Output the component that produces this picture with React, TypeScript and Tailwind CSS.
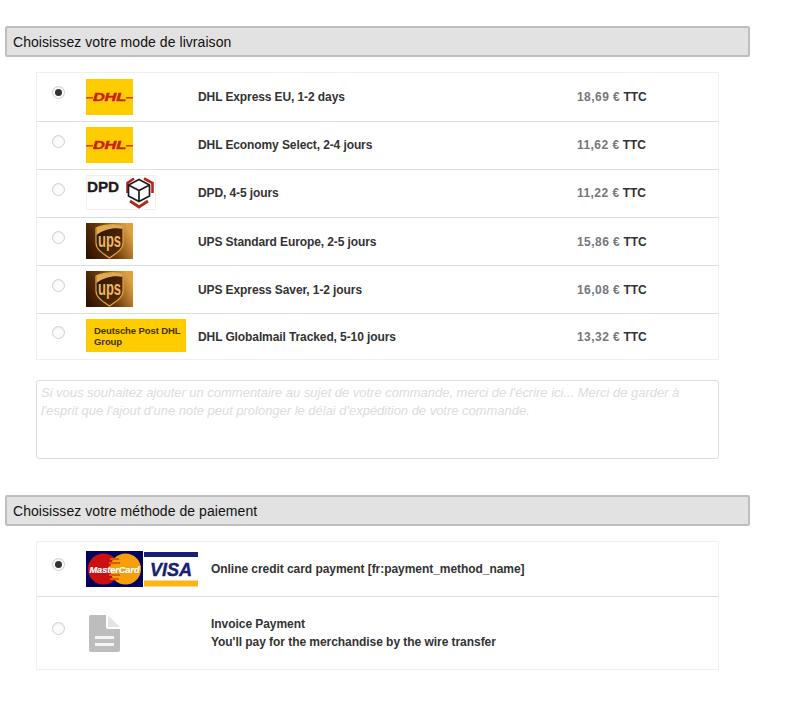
const FONT = "font-['Liberation_Sans',Arial,sans-serif]";

function DhlLogo() {
  return (
    <svg width="47" height="36" viewBox="0 0 47 36" className="block">
      <rect width="47" height="36" fill="#ffcc00" />
      <rect x="0" y="18" width="7" height="1.6" fill="#d0450f" />
      <rect x="40" y="18" width="7" height="1.6" fill="#d0450f" />
      <text x="23.5" y="21.5" textAnchor="middle" fontFamily="Liberation Sans" fontWeight="700" fontStyle="italic" fontSize="10.5" textLength="33" lengthAdjust="spacingAndGlyphs" stroke="#c8200f" strokeWidth="0.4" fill="#c8200f">DHL</text>
    </svg>
  );
}

function DpdLogo() {
  return (
    <svg width="70" height="35" viewBox="0 0 70 35" className="block">
      <rect x="0.5" y="0.5" width="69" height="34" fill="#ffffff" stroke="#f0f0f0" />
      <text x="1" y="16.5" fontFamily="Liberation Sans" fontWeight="700" fontSize="14.5" textLength="32" lengthAdjust="spacingAndGlyphs" stroke="#1c1c1c" strokeWidth="0.3" fill="#1c1c1c">DPD</text>
      <path d="M41.5 18 L41.5 8 L48 3.5 M58 3.5 L66.5 8 L66.5 18" fill="none" stroke="#b5261e" strokeWidth="2.6" />
      <path d="M44 26 L53 32 L62 26" fill="none" stroke="#b5261e" strokeWidth="2.8" />
      <path d="M53 4.5 L63.5 10 L63.5 21 L53 26.5 L42.5 21 L42.5 10 Z M42.5 10 L53 15.5 L63.5 10 M53 15.5 L53 26.5" fill="none" stroke="#1c1c1c" strokeWidth="1.7" />
    </svg>
  );
}

function UpsLogo({ id }: { id: string }) {
  return (
    <svg width="47" height="36" viewBox="0 0 47 36" className="block">
      <defs>
        <linearGradient id={`bg-${id}`} x1="0" y1="0.8" x2="1" y2="0.4">
          <stop offset="0" stopColor="#2f1102" />
          <stop offset="0.5" stopColor="#6a3a0c" />
          <stop offset="1" stopColor="#e0a040" />
        </linearGradient>
        <linearGradient id={`sh-${id}`} x1="0" y1="0" x2="1" y2="1">
          <stop offset="0" stopColor="#2e1303" />
          <stop offset="1" stopColor="#5a2f08" />
        </linearGradient>
      </defs>
      <rect width="47" height="36" fill={`url(#bg-${id})`} />
      <path d="M10 5 C17 1.5 30 0.5 37 3.5 L37 20 C37 27 29 31 23.5 35 C18 31 10 27 10 20 Z" fill={`url(#sh-${id})`} stroke="#dca64a" strokeWidth="1.2" />
      <path d="M10.5 12 C18 6 29 4 36.5 6 L36.5 3.5 C30 1 17 2 10.5 5 Z" fill="#e2ab52" />
      <text x="23.5" y="23.5" textAnchor="middle" fontFamily="Liberation Sans" fontWeight="700" fontSize="20" textLength="23" lengthAdjust="spacingAndGlyphs" fill="#e9b865">ups</text>
    </svg>
  );
}

function PostLogo() {
  return (
    <div className="w-[100px] h-[33px] bg-[#ffcc00] pl-2 pt-[6px] text-[#3f3206] text-[9.5px] leading-[11px] font-bold whitespace-nowrap">
      Deutsche Post DHL
      <br />
      Group
    </div>
  );
}

function CardsLogo() {
  return (
    <div className="flex items-start gap-[1px]">
      <svg width="57" height="36" viewBox="0 0 57 36" className="block">
        <rect width="57" height="36" fill="#00005f" />
        <circle cx="17.5" cy="18" r="15.5" fill="#cc1010" />
        <circle cx="39.5" cy="18" r="15.5" fill="#f79e0b" />
        <path d="M24 8 H33 M23 12 H34 M23 24 H34 M24 28 H33" stroke="#dc5a10" strokeWidth="2" />
        <text x="28.5" y="22" textAnchor="middle" fontFamily="Liberation Sans" fontWeight="700" fontStyle="italic" fontSize="9" textLength="50" lengthAdjust="spacingAndGlyphs" stroke="#ffffff" strokeWidth="0.2" fill="#ffffff">MasterCard</text>
      </svg>
      <svg width="54" height="36" viewBox="0 0 54 36" className="block">
        <rect width="54" height="36" fill="#ffffff" />
        <rect y="1" width="54" height="5" fill="#1a1f71" />
        <rect y="29.5" width="54" height="6" fill="#fcb514" />
        <text x="27" y="25" textAnchor="middle" fontFamily="Liberation Sans" fontWeight="700" fontStyle="italic" fontSize="18" textLength="42" lengthAdjust="spacingAndGlyphs" stroke="#1a1f71" strokeWidth="0.4" fill="#1a1f71">VISA</text>
      </svg>
    </div>
  );
}

function DocIcon() {
  return (
    <svg width="31" height="37" viewBox="0 0 31 37" className="block">
      <path d="M2 0 H17 V12 Q17 14 19 14 H31 V35 Q31 37 29 37 H2 Q0 37 0 35 V2 Q0 0 2 0 Z" fill="#bdbdbd" />
      <path d="M19 0.5 L31 12 H19 Z" fill="#e4e4e4" />
      <rect x="6" y="21" width="19" height="3" fill="#f4f4f4" />
      <rect x="6" y="28" width="19" height="3" fill="#f4f4f4" />
    </svg>
  );
}

function Radio({ checked }: { checked?: boolean }) {
  return (
    <div className="w-[13px] h-[13px] rounded-full border border-[#cfcfcf] bg-[#fbfbfb] flex items-center justify-center shadow-[inset_0_1px_1px_rgba(0,0,0,0.06)]">
      {checked && <div className="w-[7px] h-[7px] rounded-full bg-[#333333]" />}
    </div>
  );
}

function Heading({ children }: { children: string }) {
  return (
    <div className="ml-[5px] w-[745px] h-[31px] bg-[#e2e2e2] border-2 border-[#bfbfbf] rounded-[2px] pl-1.5 pt-px flex items-center text-[14px] tracking-[0.06px] text-[#111111]">
      {children}
    </div>
  );
}

const shipping = [
  { h: "h-[48px]", radioMt: "mt-[13px]", logoMt: "mt-[6px]", textMt: "mt-[17px]", logo: <DhlLogo />, name: "DHL Express EU, 1-2 days", price: "18,69 €" },
  { h: "h-[48px]", radioMt: "mt-[13px]", logoMt: "mt-[5px]", textMt: "mt-[16px]", logo: <DhlLogo />, name: "DHL Economy Select, 2-4 jours", price: "11,62 €" },
  { h: "h-[48px]", radioMt: "mt-[13px]", logoMt: "mt-[5px]", textMt: "mt-[16px]", logo: <DpdLogo />, name: "DPD, 4-5 jours", price: "11,22 €" },
  { h: "h-[48px]", radioMt: "mt-[13px]", logoMt: "mt-[5px]", textMt: "mt-[17px]", logo: <UpsLogo id="a" />, name: "UPS Standard Europe, 2-5 jours", price: "15,86 €" },
  { h: "h-[48px]", radioMt: "mt-[13px]", logoMt: "mt-[5px]", textMt: "mt-[17px]", logo: <UpsLogo id="b" />, name: "UPS Express Saver, 1-2 jours", price: "16,08 €" },
  { h: "h-[46px]", radioMt: "mt-[12px]", logoMt: "mt-[5px]", textMt: "mt-[16px]", logo: <PostLogo />, name: "DHL Globalmail Tracked, 5-10 jours", price: "13,32 €" },
];

export default function App() {
  return (
    <div className={`${FONT} w-[800px] h-[710px] bg-white pt-[26px] overflow-hidden`}>
      <Heading>Choisissez votre mode de livraison</Heading>

      <div className="ml-[36px] mt-[15px] w-[683px] border border-[#f0f0f0] text-[12px] tracking-[-0.1px] font-bold text-[#333333]">
        {shipping.map((s, i) => (
          <div key={s.name} className={`flex ${s.h} ${i > 0 ? "border-t border-[#dddddd]" : ""}`}>
            <div className="w-[49px] pl-[15px] shrink-0">
              <div className={s.radioMt}><Radio checked={i === 0} /></div>
            </div>
            <div className="w-[112px] shrink-0">
              <div className={s.logoMt}>{s.logo}</div>
            </div>
            <div className={`w-[379px] shrink-0 leading-[14px] ${s.textMt}`}>{s.name}</div>
            <div className={`leading-[14px] ${s.textMt}`}>
              <span className="text-[#777777] tracking-[0.45px]">{s.price}</span> TTC
            </div>
          </div>
        ))}
      </div>

      <div className="ml-[36px] mt-[20px] w-[683px] h-[79px] border border-[#dddddd] rounded-[3px] px-[4px] pt-[3px] text-[13px] tracking-[-0.02px] leading-[18px] italic text-[#dcdcdc]">
        Si vous souhaitez ajouter un commentaire au sujet de votre commande, merci de l'écrire ici... Merci de garder à
        l'esprit que l'ajout d'une note peut prolonger le délai d'expédition de votre commande.
      </div>

      <div className="mt-[36px]">
        <Heading>Choisissez votre méthode de paiement</Heading>
      </div>

      <div className="ml-[36px] mt-[15px] w-[683px] border border-[#f0f0f0] text-[12px] tracking-[-0.05px] font-bold text-[#333333]">
        <div className="flex h-[54px]">
          <div className="w-[49px] pl-[15px] shrink-0">
            <div className="mt-[16px]"><Radio checked /></div>
          </div>
          <div className="w-[125px] shrink-0 pt-[9px]"><CardsLogo /></div>
          <div className="pt-[20px] leading-[14px]">Online credit card payment [fr:payment_method_name]</div>
        </div>
        <div className="flex h-[73px] border-t border-[#dddddd]">
          <div className="w-[49px] pl-[15px] shrink-0">
            <div className="mt-[25px]"><Radio /></div>
          </div>
          <div className="w-[125px] shrink-0 pt-[18px] pl-[3px]"><DocIcon /></div>
          <div className="pt-[18px] leading-[18px]">
            Invoice Payment
            <br />
            You'll pay for the merchandise by the wire transfer
          </div>
        </div>
      </div>
    </div>
  );
}
